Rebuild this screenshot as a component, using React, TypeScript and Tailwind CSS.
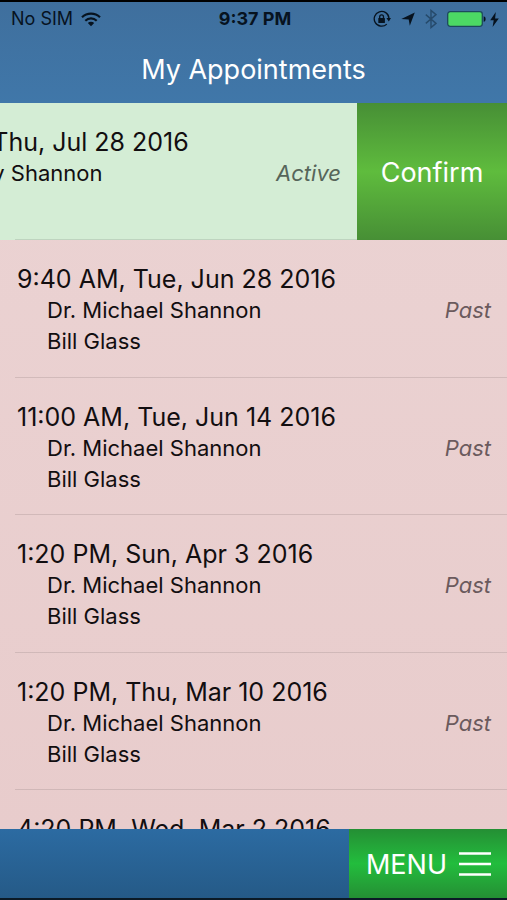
import React from 'react';
import { clsx } from 'clsx';

interface Appointment {
  id: number;
  time: string;
  doctor: string;
  patient: string;
  status: 'Active' | 'Past';
}

const appointments: Appointment[] = [
  { id: 1, time: '10:20 AM, Thu, Jul 28 2016', doctor: 'Dr. Wendy Shannon', patient: 'Bill Glass', status: 'Active' },
  { id: 2, time: '9:40 AM, Tue, Jun 28 2016', doctor: 'Dr. Michael Shannon', patient: 'Bill Glass', status: 'Past' },
  { id: 3, time: '11:00 AM, Tue, Jun 14 2016', doctor: 'Dr. Michael Shannon', patient: 'Bill Glass', status: 'Past' },
  { id: 4, time: '1:20 PM, Sun, Apr 3 2016', doctor: 'Dr. Michael Shannon', patient: 'Bill Glass', status: 'Past' },
  { id: 5, time: '1:20 PM, Thu, Mar 10 2016', doctor: 'Dr. Michael Shannon', patient: 'Bill Glass', status: 'Past' },
  { id: 6, time: '4:20 PM, Wed, Mar 2 2016', doctor: 'Dr. Michael Shannon', patient: 'Bill Glass', status: 'Past' },
];

function WifiIcon() {
  return (
    <svg viewBox="0 0 20 15" className="h-[15px] w-5" fill="none" stroke="currentColor" strokeWidth="2.2" aria-hidden="true">
      <path d="M1 5.2a13 13 0 0 1 18 0" />
      <path d="M4.3 8.7a8.4 8.4 0 0 1 11.4 0" />
      <path d="M10 14.2 6.8 11a4.6 4.6 0 0 1 6.4 0z" fill="currentColor" stroke="none" />
    </svg>
  );
}

function RotationLockIcon() {
  return (
    <svg viewBox="0 0 18 18" className="size-[18px]" fill="none" stroke="currentColor" aria-hidden="true">
      <path d="M13.8 14.1A7.4 7.4 0 1 1 16 8.2" strokeWidth="1.3" />
      <path d="M13.4 8h4.6l-2.2 3.4z" fill="currentColor" stroke="none" />
      <rect x="5.3" y="8" width="6.6" height="5" rx=".5" fill="currentColor" stroke="none" />
      <path d="M6.7 8.2V6.8a1.9 1.9 0 0 1 3.8 0v1.4" strokeWidth="1.3" />
    </svg>
  );
}

function LocationIcon() {
  return (
    <svg viewBox="0 0 14 14" className="size-[14px]" fill="currentColor" aria-hidden="true">
      <path d="M13.8.5 8.8 13.8 7.7 7.6.3 7z" />
    </svg>
  );
}

function BluetoothIcon() {
  return (
    <svg viewBox="0 0 12 20" className="h-5 w-3 text-[#264a6b]" fill="none" stroke="currentColor" strokeWidth="1.4" aria-hidden="true">
      <path d="M.8 5.6 11 14.4 6 18.6V1.4l5 4.2L.8 14.4" />
    </svg>
  );
}

function BatteryIcon() {
  return (
    <svg viewBox="0 0 39 16" className="h-4 w-[39px]" aria-hidden="true">
      <rect x=".7" y=".7" width="34.6" height="14.6" rx="2.5" fill="#4cd964" stroke="#1d4a5c" strokeWidth="1.3" />
      <path d="M36.7 5.2c1.4.4 1.9 1.4 1.9 2.8s-.5 2.4-1.9 2.8z" fill="currentColor" />
    </svg>
  );
}

function ChargingIcon() {
  return (
    <svg viewBox="0 0 9 15" className="h-[15px] w-[9px]" fill="currentColor" aria-hidden="true">
      <path d="M5.8 0 .2 8.2h3.5L2.6 15l6.2-8.6H5.1z" />
    </svg>
  );
}

function StatusBar() {
  return (
    <div className="grid h-9 grid-cols-3 items-center border-t-2 border-black pr-2 pl-[11px] text-lg leading-5 text-[#07131f]">
      <div className="flex items-center gap-2">
        <span>No SIM</span>
        <WifiIcon />
      </div>
      <span className="text-center font-bold whitespace-nowrap">9:37 PM</span>
      <div className="flex items-center justify-end gap-[10px]">
        <RotationLockIcon />
        <LocationIcon />
        <BluetoothIcon />
        <div className="flex items-center gap-1">
          <BatteryIcon />
          <ChargingIcon />
        </div>
      </div>
    </div>
  );
}

function AppointmentRow({ appointment }: { appointment: Appointment }) {
  const { time, doctor, patient, status } = appointment;
  const isActive = status === 'Active';

  return (
    <li
      className={clsx(
        'relative flex justify-end overflow-hidden odd:h-[137px] even:h-[138px]',
        isActive && 'bg-[#d4edd5]'
      )}
    >
      <div className="w-full shrink-0 pt-6 pr-4 pl-[17px]">
        <h2 className="text-[25px] leading-[31px] whitespace-nowrap">{time}</h2>
        <div className="flex items-start justify-between pl-[30px] text-[22px] leading-[31px]">
          <div>
            <p>{doctor}</p>
            <p>{patient}</p>
          </div>
          <span className={clsx('italic', isActive ? 'text-[#56655a]' : 'text-[#6b5a5d]')}>{status}</span>
        </div>
      </div>
      {isActive && (
        <button
          type="button"
          className="w-[150px] shrink-0 bg-linear-to-b from-[#478f35] via-[#5fbc3d] to-[#478f35] pt-1 text-[27px] text-white"
        >
          Confirm
        </button>
      )}
      <div className={clsx('absolute bottom-0 left-[15px] h-px bg-black/10', isActive ? 'right-[150px]' : 'right-0')} />
    </li>
  );
}

export default function App() {
  return (
    <div className="flex h-dvh flex-col overflow-hidden bg-[#e9cdce] font-['Inter','Liberation_Sans',sans-serif] text-[#120e10]">
      <header className="shrink-0 bg-linear-to-b from-[#3f6f9d] to-[#4077a9]">
        <StatusBar />
        <h1 className="flex h-[67px] items-center justify-center text-[27px] leading-9 text-white">My Appointments</h1>
      </header>

      <main className="min-h-0 flex-1 overflow-hidden bg-linear-to-b from-[#ebd3d3] to-[#e8cccc]">
        <ul>
          {appointments.map((appointment) => (
            <AppointmentRow key={appointment.id} appointment={appointment} />
          ))}
        </ul>
      </main>

      <footer className="flex h-[71px] shrink-0 justify-end border-b-2 border-[#0b1a26] bg-linear-to-b from-[#2c6ba2] to-[#255a87]">
        <button
          type="button"
          className="flex items-center gap-3 bg-linear-to-b from-[#248f34] via-[#22bd3d] to-[#248f34] pr-4 pl-[17px] text-[27px] text-white"
        >
          <span className="pt-1">MENU</span>
          <svg viewBox="0 0 32 24" className="h-6 w-8" stroke="currentColor" strokeWidth="2.4" aria-hidden="true">
            <path d="M0 1.5h32M0 12h32M0 22.5h32" />
          </svg>
        </button>
      </footer>
    </div>
  );
}
